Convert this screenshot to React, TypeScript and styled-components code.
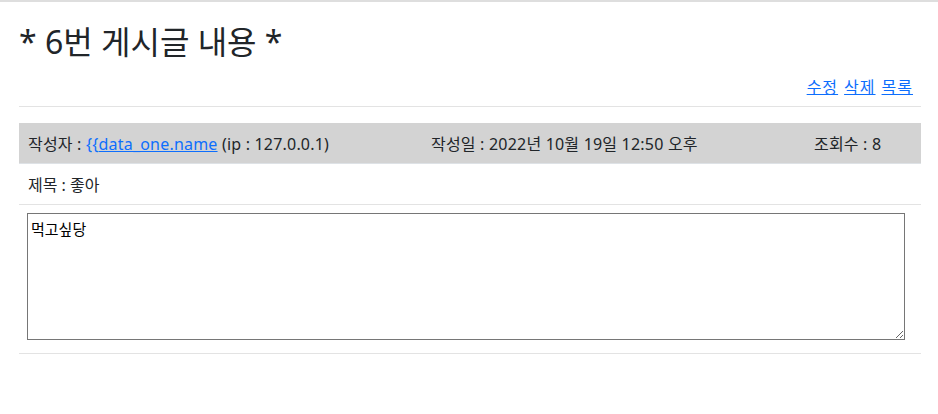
import * as React from 'react';
import styled, { createGlobalStyle } from 'styled-components';

const GlobalStyle = createGlobalStyle`
  body {
    margin: 0;
    background: #fff;
    color: #212529;
    font-family: "Noto Sans", "Noto Sans CJK KR", sans-serif;
  }
`;

const Page = styled.div`
  border-top: 2px solid #dedede;
  padding: 0 17px 0 19px;
`;

const Title = styled.h2`
  margin: 21px 0 0 0;
  font-size: 32px;
  font-weight: 400;
  line-height: 1.2;
`;

const LinkRow = styled.div`
  display: flex;
  justify-content: flex-end;
  gap: 6px;
  padding: 15px 8px 8px 0;
  font-size: 16px;
  line-height: 22px;
  letter-spacing: 1px;
  border-bottom: 1px solid #e3e3e3;
`;

const BlueLink = styled.a`
  color: #0d6efd;
  text-decoration: underline;
  cursor: pointer;
`;

const InfoBar = styled.div`
  margin-top: 16px;
  height: 40px;
  display: grid;
  grid-template-columns: 403px 383px 1fr;
  align-items: center;
  padding-left: 9px;
  background: #d3d3d3;
  font-size: 16px;
  letter-spacing: 0.2px;
  border-bottom: 1px solid #dee2e6;
`;

const Blue = styled.span`
  color: #0d6efd;
`;

const SubjectRow = styled.div`
  height: 40px;
  display: flex;
  align-items: center;
  padding-left: 9px;
  font-size: 16px;
  border-bottom: 1px solid #e3e3e3;
`;

const BodyRow = styled.div`
  padding: 8px 0 13px 8px;
  border-bottom: 1px solid #e3e3e3;
`;

const Content = styled.textarea`
  display: block;
  box-sizing: border-box;
  width: 878px;
  height: 127px;
  border: 1px solid #767676;
  padding: 4px 3px;
  font-family: "Noto Sans CJK KR", monospace;
  font-size: 15px;
  color: #000;
  resize: both;
  outline: none;
`;

const App: React.FC = () => {
  return (
    <Page>
      <GlobalStyle />
      <Title>* 6번 게시글 내용 *</Title>
      <LinkRow>
        <BlueLink>수정</BlueLink>
        <BlueLink>삭제</BlueLink>
        <BlueLink>목록</BlueLink>
      </LinkRow>
      <InfoBar>
        <span>
          작성자 : <Blue>{'{{'}</Blue><BlueLink>data_one.name</BlueLink> (ip : 127.0.0.1)
        </span>
        <span>작성일 : 2022년 10월 19일 12:50 오후</span>
        <span>조회수 : 8</span>
      </InfoBar>
      <SubjectRow>제목 : 좋아</SubjectRow>
      <BodyRow>
        <Content defaultValue="먹고싶당" />
      </BodyRow>
    </Page>
  );
};

export default App;
